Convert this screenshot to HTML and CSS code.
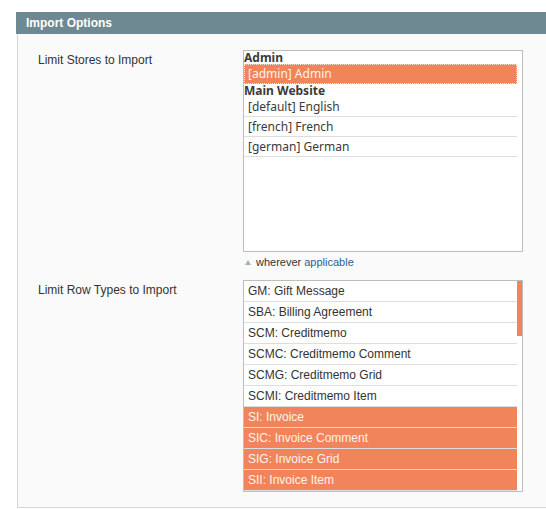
FILE: index.html
```html
<!DOCTYPE html>
<html lang="en">
<head>
<meta charset="utf-8">
<title>Import Options</title>
<link rel="stylesheet" href="styles.css">
</head>
<body>
<div class="section">
  <div class="section-head">Import Options</div>
  <div class="panel">
    <div class="field">
      <div class="label">Limit Stores to Import</div>
      <div class="value">
        <div class="list stores" role="listbox" aria-multiselectable="true">
          <div class="group">Admin</div>
          <div class="opt sel focus">[admin] Admin</div>
          <div class="group">Main Website</div>
          <div class="opt">[default] English</div>
          <div class="opt">[french] French</div>
          <div class="opt">[german] German</div>
        </div>
        <div class="hint"><span class="tri"></span>wherever <span class="link">applicable</span></div>
      </div>
    </div>
    <div class="field">
      <div class="label">Limit Row Types to Import</div>
      <div class="value">
        <div class="list rows" role="listbox" aria-multiselectable="true">
          <div class="rows-items">
            <div class="opt">GM: Gift Message</div>
            <div class="opt">SBA: Billing Agreement</div>
            <div class="opt">SCM: Creditmemo</div>
            <div class="opt">SCMC: Creditmemo Comment</div>
            <div class="opt">SCMG: Creditmemo Grid</div>
            <div class="opt">SCMI: Creditmemo Item</div>
            <div class="opt sel">SI: Invoice</div>
            <div class="opt sel">SIC: Invoice Comment</div>
            <div class="opt sel">SIG: Invoice Grid</div>
            <div class="opt sel">SII: Invoice Item</div>
          </div>
          <div class="scrollbar"><div class="thumb"></div></div>
        </div>
      </div>
    </div>
  </div>
</div>
</body>
</html>
```
FILE: styles.css
```css
html, body {
  margin: 0;
  padding: 0;
  background: #ffffff;
  overflow: hidden;
}

body {
  font-family: "Liberation Sans", Arial, sans-serif;
  font-size: 12px;
  color: #333333;
}

.section {
  margin: 12px 0 0 16px;
  width: 530px;
}

.section-head {
  height: 22px;
  line-height: 22px;
  background: #6f8992;
  color: #ffffff;
  font-weight: bold;
  font-size: 12px;
  padding-left: 10px;
}

.panel {
  margin-left: 1px;
  background: #fafafa;
  border-left: 1px solid #d6d6d6;
  border-bottom: 1px solid #d6d6d6;
  padding: 16px 0 15px 20px;
  display: flex;
  flex-direction: column;
  gap: 11px;
}

.field {
  display: grid;
  grid-template-columns: 205px 280px;
}

.label {
  padding-top: 3px;
  line-height: 14px;
  color: #333333;
}

.list {
  box-sizing: border-box;
  background: #ffffff;
  border: 1px solid #bdbdbd;
  width: 280px;
}

.stores {
  height: 202px;
  padding-right: 5px;
  font-family: "Noto Sans", "DejaVu Sans", sans-serif;
  font-size: 12px;
  color: #3a3a3a;
}

.stores .group {
  font-weight: bold;
  height: 13px;
  line-height: 13px;
}

.stores .opt {
  height: 19px;
  line-height: 19px;
  padding-left: 4px;
  border-bottom: 1px solid #dddddd;
}

.stores .opt.sel {
  border-bottom-color: transparent;
}

.opt.sel {
  background: #f1845a;
  color: #fff3ee;
}

.opt.focus {
  outline: 1px dotted #ffe2d6;
  outline-offset: -1px;
}

.rows {
  height: 212px;
  display: flex;
}

.rows-items {
  flex: 1;
  min-width: 0;
}

.rows .opt {
  height: 20px;
  line-height: 20px;
  padding-left: 4px;
  border-bottom: 1px solid #dddddd;
  white-space: nowrap;
}

.scrollbar {
  width: 5px;
  background: #ffffff;
}

.thumb {
  height: 55px;
  background: #f1845a;
}

.hint {
  margin-top: 3px;
  font-size: 11px;
  line-height: 14px;
  color: #333333;
  display: flex;
  align-items: center;
  padding-left: 2px;
}

.tri {
  width: 0;
  height: 0;
  border-left: 3px solid transparent;
  border-right: 3px solid transparent;
  border-bottom: 5px solid #a4b2b6;
  margin-right: 5px;
}

.link {
  color: #2f5d92;
  margin-left: 3px;
}
```
